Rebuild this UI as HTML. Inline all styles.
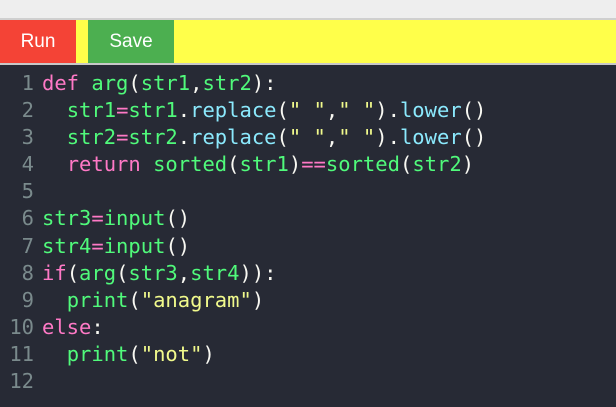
<!DOCTYPE html>
<html><head><style>
body{margin:0;width:616px;height:407px;overflow:hidden;background:#272a35;font-family:"Liberation Sans",sans-serif}
.top{height:18px;background:#eeeeee;border-bottom:2px solid #cfcfcf}
.bar{height:43px;background:#ffff4a;position:relative;border-bottom:2px solid #c8c8c8}
.btn{position:absolute;top:0;height:43px;color:#fff;font-size:19px;line-height:43px;text-align:center}
.run{left:0;width:76px;background:#f44336}
.save{left:88px;width:86px;background:#4caf50}
.code{position:relative;font-family:"DejaVu Sans Mono","Liberation Mono",monospace;font-size:20.5px;line-height:27.1px;padding-top:5px;color:#f8f8f2;white-space:pre}
.ln{position:absolute;left:0;width:34px;text-align:right;color:#7a8a8c}
.l{display:block;padding-left:42px;height:27.1px}
.k{color:#ff79c6}.g{color:#50fa7b}.b{color:#8be9fd}.s{color:#f1fa8c}
</style></head><body>
<div class="top"></div>
<div class="bar"><div class="btn run">Run</div><div class="btn save">Save</div></div>
<div class="code"><div class="ln">1
2
3
4
5
6
7
8
9
10
11
12</div><span class="l"><span class="k">def</span> <span class="g">arg</span>(<span class="g">str1</span>,<span class="g">str2</span>):</span><span class="l">  <span class="g">str1</span><span class="k">=</span><span class="g">str1</span>.<span class="b">replace</span>(<span class="s">" "</span>,<span class="s">" "</span>).<span class="b">lower</span>()</span><span class="l">  <span class="g">str2</span><span class="k">=</span><span class="g">str2</span>.<span class="b">replace</span>(<span class="s">" "</span>,<span class="s">" "</span>).<span class="b">lower</span>()</span><span class="l">  <span class="k">return</span> <span class="g">sorted</span>(<span class="g">str1</span>)<span class="k">==</span><span class="g">sorted</span>(<span class="g">str2</span>)</span><span class="l"> </span><span class="l"><span class="g">str3</span><span class="k">=</span><span class="g">input</span>()</span><span class="l"><span class="g">str4</span><span class="k">=</span><span class="g">input</span>()</span><span class="l"><span class="k">if</span>(<span class="g">arg</span>(<span class="g">str3</span>,<span class="g">str4</span>)):</span><span class="l">  <span class="g">print</span>(<span class="s">"anagram"</span>)</span><span class="l"><span class="k">else</span>:</span><span class="l">  <span class="g">print</span>(<span class="s">"not"</span>)</span><span class="l"> </span></div>
</body></html>
